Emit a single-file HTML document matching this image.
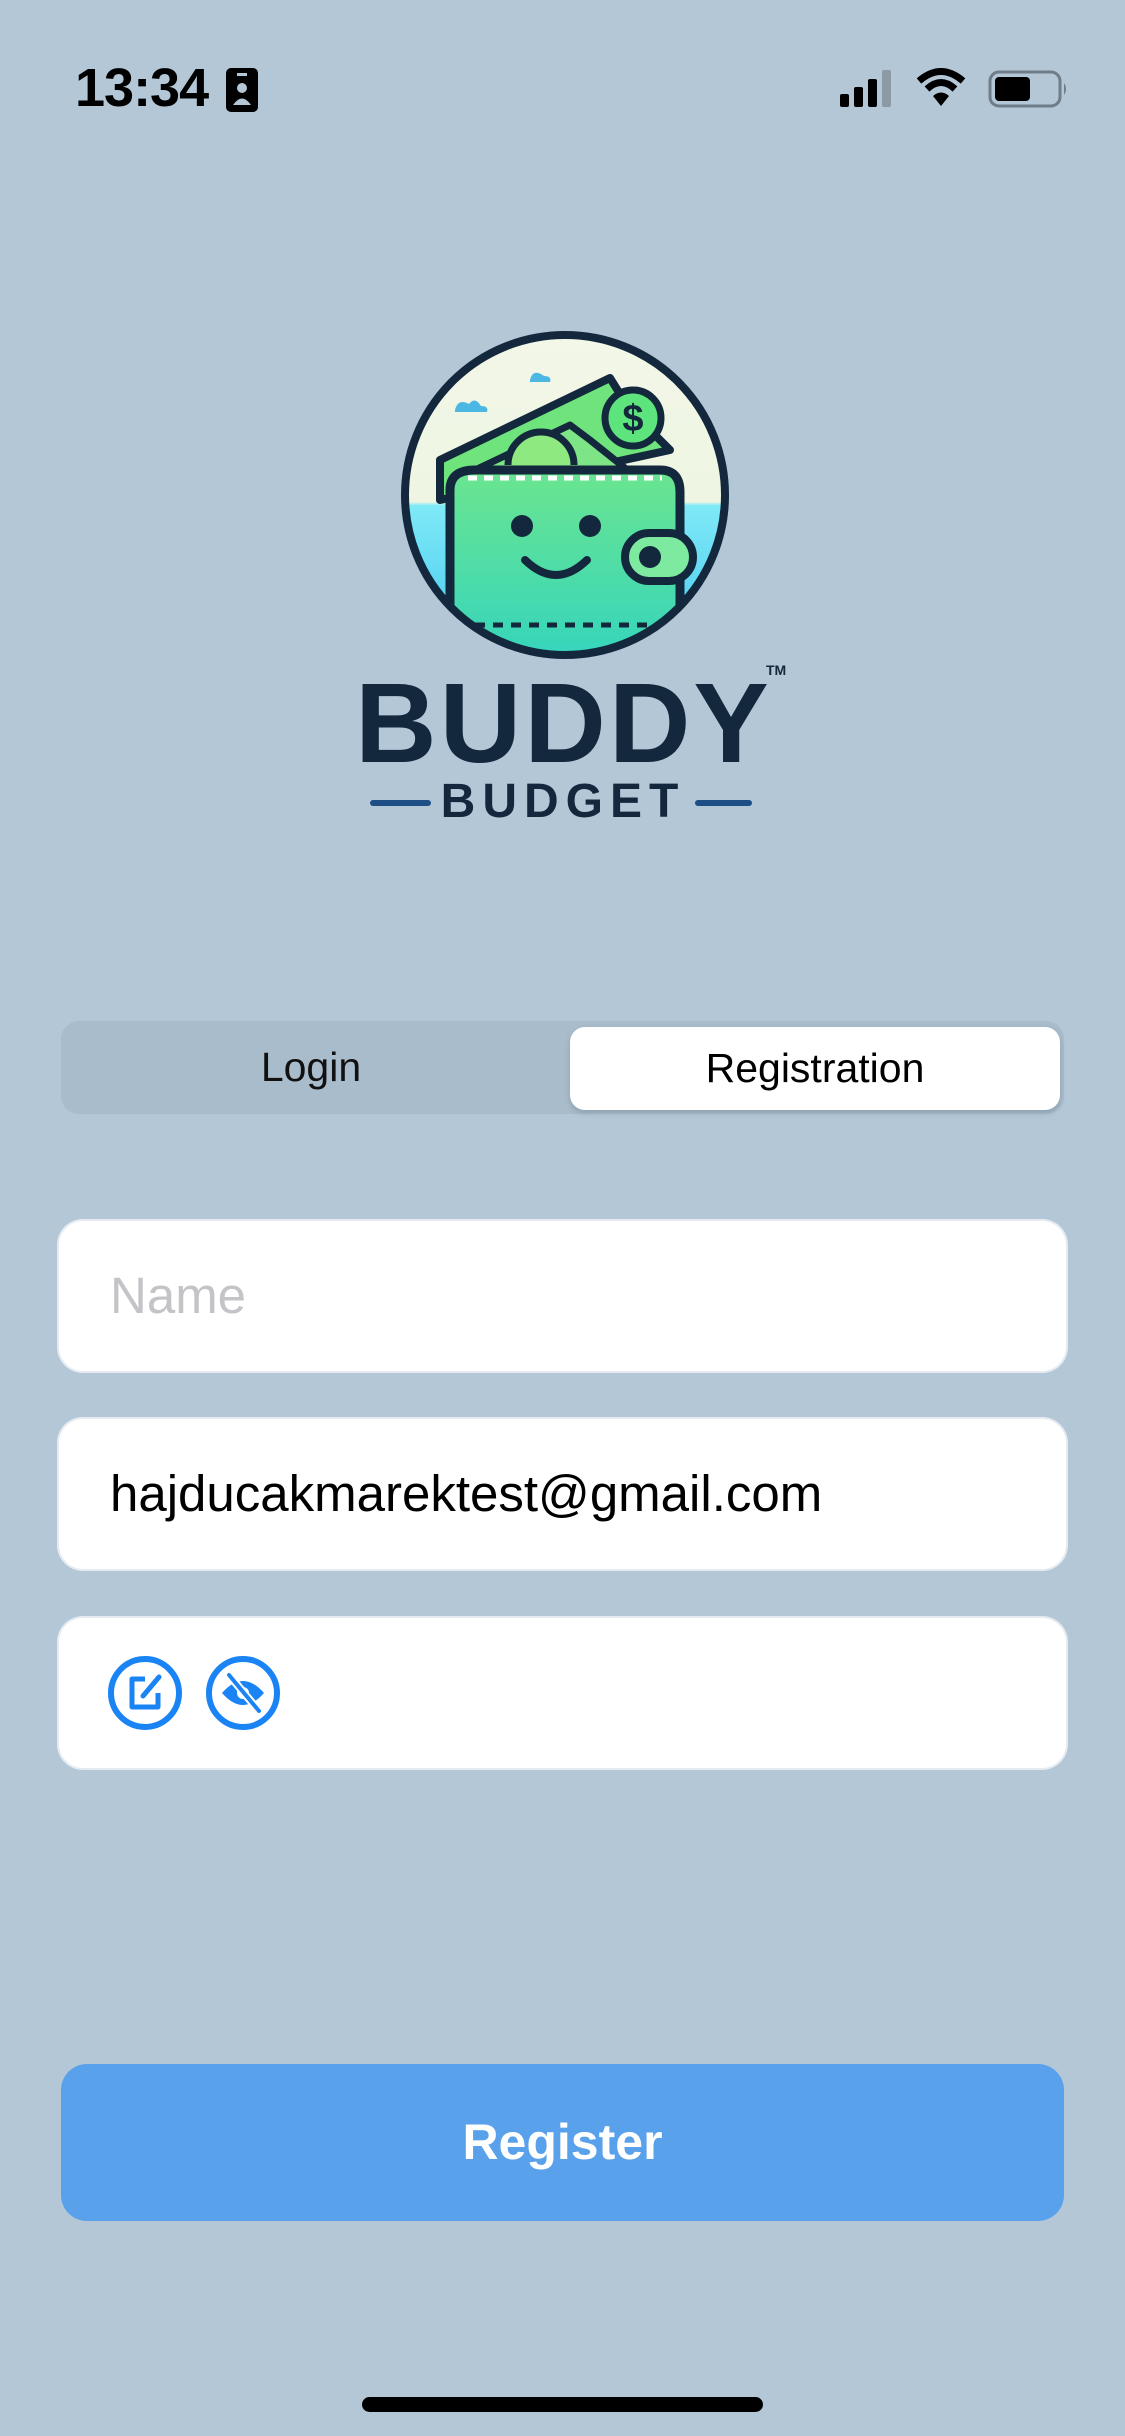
<!DOCTYPE html>
<html><head><meta charset="utf-8">
<style>
html,body{margin:0;padding:0}
body{width:1125px;height:2436px;background:#b4c7d7;position:relative;overflow:hidden;font-family:"Liberation Sans",sans-serif}
.abs{position:absolute}
.field{position:absolute;left:59px;width:1007px;height:150px;background:#fff;border-radius:24px;box-shadow:0 0 0 2px #e6ebf2}
.ftxt{position:absolute;left:51px;top:0;line-height:150px;font-size:51px}
</style></head><body>
<!-- status bar -->
<div class="abs" style="left:75px;top:60px;font-size:54px;font-weight:bold;letter-spacing:-1px;line-height:56px">13:34</div>
<svg class="abs" style="left:226px;top:68px" width="32" height="44" viewBox="0 0 32 44"><rect x="0" y="0" width="32" height="44" rx="5" fill="#000"/><rect x="11" y="5" width="10" height="3" fill="#b4c7d7"/><circle cx="16" cy="20" r="5" fill="#b4c7d7"/><path d="M7 37 Q16 24 25 37 Z" fill="#b4c7d7"/></svg>
<svg class="abs" style="left:840px;top:70px" width="60" height="38" viewBox="0 0 60 38"><rect x="0" y="24" width="9" height="13" rx="2"/><rect x="14" y="17" width="9" height="20" rx="2"/><rect x="28" y="9" width="9" height="28" rx="2"/><rect x="42" y="0" width="9" height="37" rx="2" fill="#8c9aa6"/></svg>
<svg class="abs" style="left:915px;top:68px" width="52" height="40" viewBox="0 0 52 40"><path d="M26 38 L18 28 Q26 21 34 28 Z"/><path d="M12 21 Q26 8 40 21" fill="none" stroke="#000" stroke-width="7"/><path d="M4 13 Q26 -6 48 13" fill="none" stroke="#000" stroke-width="7"/></svg>
<svg class="abs" style="left:988px;top:70px" width="80" height="38" viewBox="0 0 80 38"><rect x="2" y="2" width="70" height="34" rx="9" fill="none" stroke="#6f7d88" stroke-width="3"/><rect x="7" y="7" width="35" height="24" rx="4"/><path d="M76 13 Q80 19 76 25 Z" fill="#6f7d88"/></svg>

<!-- logo -->
<svg class="abs" style="left:390px;top:320px" width="350" height="350" viewBox="0 0 350 350">
<defs>
<clipPath id="c"><circle cx="175" cy="175" r="160"/></clipPath>
<linearGradient id="sky" x1="0" y1="0" x2="0" y2="1"><stop offset="0" stop-color="#f3f7e8"/><stop offset="0.52" stop-color="#eef5e2"/><stop offset="0.53" stop-color="#7fe9f7"/><stop offset="1" stop-color="#3ec6ee"/></linearGradient>
<linearGradient id="wal" x1="0" y1="0" x2="0" y2="1"><stop offset="0" stop-color="#6be58f"/><stop offset="1" stop-color="#2fd3c2"/></linearGradient>
</defs>
<g clip-path="url(#c)">
<rect width="350" height="350" fill="url(#sky)"/>
<path d="M65 90 q3 -12 14 -6 q6 -8 12 2 q8 0 6 6 h-32z" fill="#4bb8e4"/>
<path d="M140 60 q3 -12 14 -4 q8 0 6 6 h-20z" fill="#4bb8e4"/>
<path d="M50 170 L50 140 L220 58 L240 90 L280 130 L50 180Z" fill="#6fe37c" stroke="#13283d" stroke-width="8" stroke-linejoin="round"/>
<path d="M85 170 L85 150 L180 105 L200 120 L250 160Z" fill="#7de585" stroke="#13283d" stroke-width="7" stroke-linejoin="round"/>
<path d="M118 145 a33 33 0 0 1 66 0" fill="#8eea80" stroke="#13283d" stroke-width="7"/>
<path d="M60 170 Q60 150 85 150 L270 150 Q290 150 290 172 L290 360 L60 360 Z" fill="url(#wal)" stroke="#13283d" stroke-width="9"/>
<path d="M78 158 L272 158" stroke="#fff" stroke-width="5" stroke-dasharray="9 7"/>
<path d="M85 305 L278 305" stroke="#13283d" stroke-width="5" stroke-dasharray="10 8"/>
<circle cx="132" cy="206" r="11" fill="#13283d"/><circle cx="200" cy="206" r="11" fill="#13283d"/>
<path d="M135 240 Q166 270 197 240" fill="none" stroke="#13283d" stroke-width="8" stroke-linecap="round"/>
<rect x="235" y="213" width="68" height="48" rx="24" fill="#7deaa0" stroke="#13283d" stroke-width="8"/>
<circle cx="260" cy="237" r="11" fill="#13283d"/>
</g>
<circle cx="175" cy="175" r="160" fill="none" stroke="#13283d" stroke-width="8"/>
<circle cx="243" cy="98" r="28" fill="#5ee47d" stroke="#13283d" stroke-width="7"/>
<text x="243" y="111" text-anchor="middle" font-family="Liberation Sans" font-weight="bold" font-size="38" fill="#13283d">$</text>
</svg>
<div class="abs" style="left:355px;top:663px;width:413px;height:110px;overflow:visible">
<div style="width:470px;font-size:113px;font-weight:bold;color:#13283d;letter-spacing:3px;line-height:120px;white-space:nowrap">BUDDY</div>
</div>
<div class="abs" style="left:766px;top:662px;font-size:14px;font-weight:bold;color:#13283d">TM</div>
<div class="abs" style="left:370px;top:800px;width:61px;height:6px;background:#1d4f86;border-radius:3px"></div>
<div class="abs" style="left:695px;top:800px;width:57px;height:6px;background:#1d4f86;border-radius:3px"></div>
<div class="abs" style="left:440px;top:777px;width:246px;text-align:center;font-size:48px;font-weight:bold;color:#13283d;letter-spacing:7px;line-height:50px">BUDGET</div>

<!-- segmented -->
<div class="abs" style="left:61px;top:1021px;width:1003px;height:93px;background:#a9bccb;border-radius:18px"></div>
<div class="abs" style="left:570px;top:1027px;width:490px;height:83px;background:#fff;border-radius:15px;box-shadow:0 3px 6px rgba(60,80,100,0.25)"></div>
<div class="abs" style="left:61px;top:1021px;width:500px;height:93px;line-height:93px;text-align:center;font-size:41px;color:#111">Login</div>
<div class="abs" style="left:570px;top:1027px;width:490px;height:83px;line-height:83px;text-align:center;font-size:41px;color:#000">Registration</div>

<!-- fields -->
<div class="field" style="top:1221px"><div class="ftxt" style="color:#c4c4c8">Name</div></div>
<div class="field" style="top:1419px"><div class="ftxt" style="color:#000">hajducakmarektest@gmail.com</div></div>
<div class="field" style="top:1618px">
<svg class="abs" style="left:48px;top:37px" width="76" height="76" viewBox="0 0 76 76"><circle cx="38" cy="38" r="34" fill="none" stroke="#1a84f5" stroke-width="6"/><path d="M38 24 H25 V52 H51 V38" fill="none" stroke="#1a84f5" stroke-width="5" stroke-linejoin="round"/><path d="M36 41 L52 22" stroke="#1a84f5" stroke-width="5" stroke-linecap="round"/></svg>
<svg class="abs" style="left:146px;top:37px" width="76" height="76" viewBox="0 0 76 76"><circle cx="38" cy="38" r="34" fill="none" stroke="#1a84f5" stroke-width="6"/><path d="M17 38 Q38 14 59 38 Q38 62 17 38Z" fill="#1a84f5"/><circle cx="38" cy="38" r="6" fill="#fff"/><path d="M24 20 L54 56" stroke="#fff" stroke-width="8"/><path d="M24 20 L54 56" stroke="#1a84f5" stroke-width="4" stroke-linecap="round"/></svg>
</div>

<!-- register -->
<div class="abs" style="left:61px;top:2064px;width:1003px;height:157px;background:#59a1eb;border-radius:26px;color:#fff;font-size:50px;font-weight:bold;text-align:center;line-height:157px">Register</div>
<div class="abs" style="left:362px;top:2397px;width:401px;height:15px;background:#000;border-radius:8px"></div>
</body></html>
